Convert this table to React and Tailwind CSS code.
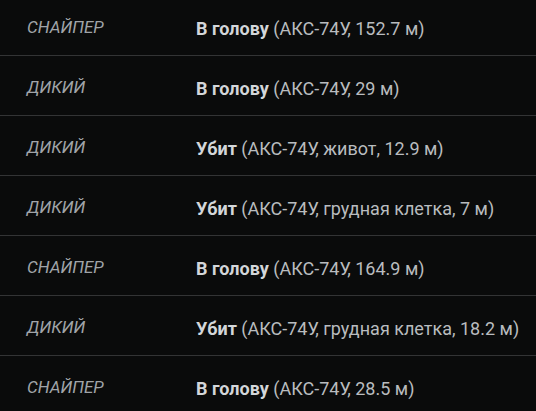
export default function App() {
  const rows = [
    ["СНАЙПЕР", "В голову", "(АКС-74У, 152.7 м)"],
    ["ДИКИЙ", "В голову", "(АКС-74У, 29 м)"],
    ["ДИКИЙ", "Убит", "(АКС-74У, живот, 12.9 м)"],
    ["ДИКИЙ", "Убит", "(АКС-74У, грудная клетка, 7 м)"],
    ["СНАЙПЕР", "В голову", "(АКС-74У, 164.9 м)"],
    ["ДИКИЙ", "Убит", "(АКС-74У, грудная клетка, 18.2 м)"],
    ["СНАЙПЕР", "В голову", "(АКС-74У, 28.5 м)"],
  ];
  return (
    <div className="w-[536px] h-[411px] overflow-hidden bg-[#0a0b0b]" style={{ fontFamily: "Roboto, 'Noto Sans', sans-serif" }}>
      <div className="-mt-[4px]">
        {rows.map((r, i) => (
          <div key={i} className="flex items-center h-[60px] pt-[5px] border-b border-[#333435]">
            <div className="w-[196px] pl-[27px] italic text-[17px] text-[#a0a4a8]">{r[0]}</div>
            <div className="text-[18px] text-[#b9bcbf] whitespace-nowrap">
              <span className="font-bold text-[#d3d6d9]">{r[1]}</span> {r[2]}
            </div>
          </div>
        ))}
      </div>
    </div>
  );
}
